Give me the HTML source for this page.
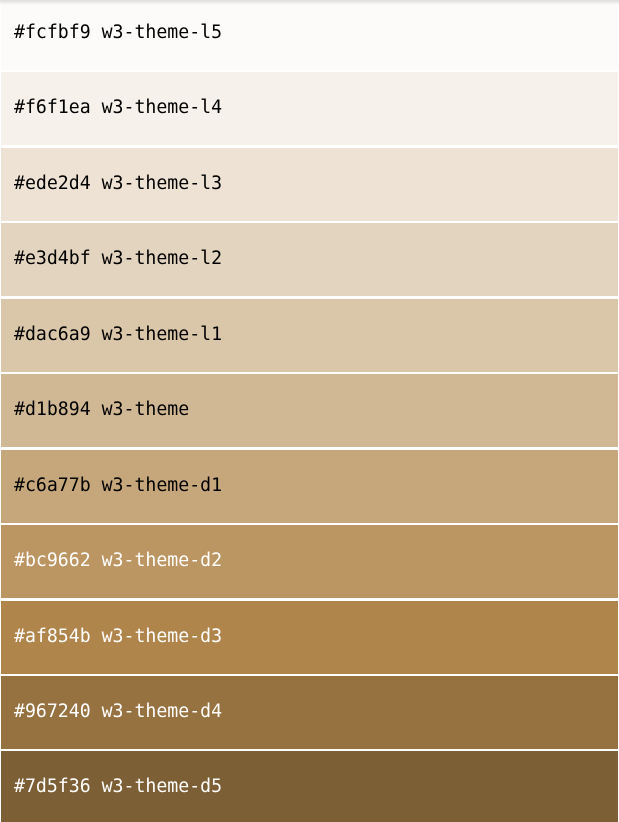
<!DOCTYPE html>
<html><head><style>
body{margin:0;width:619px;height:822px;overflow:hidden;background:#fff;position:relative;font-family:"DejaVu Sans Mono","Liberation Mono",monospace;font-size:18.2px}
.r{position:absolute;left:1px;width:617px;height:73px;line-height:72px;padding-left:13px;box-sizing:border-box;color:#000}
.w{color:#fff}
.sh{position:absolute;left:0;top:0;width:619px;height:5px;background:linear-gradient(#ddd,rgba(255,255,255,0))}
</style></head><body>
<div class="r" style="top:-3px;background:#fcfbf9">#fcfbf9 w3-theme-l5</div>
<div class="r" style="top:72px;background:#f6f1ea">#f6f1ea w3-theme-l4</div>
<div class="r" style="top:147.5px;background:#ede2d4">#ede2d4 w3-theme-l3</div>
<div class="r" style="top:223px;background:#e3d4bf">#e3d4bf w3-theme-l2</div>
<div class="r" style="top:298.5px;background:#dac6a9">#dac6a9 w3-theme-l1</div>
<div class="r" style="top:374px;background:#d1b894">#d1b894 w3-theme</div>
<div class="r" style="top:449.5px;background:#c6a77b">#c6a77b w3-theme-d1</div>
<div class="r w" style="top:525px;background:#bc9662">#bc9662 w3-theme-d2</div>
<div class="r w" style="top:600.5px;background:#af854b">#af854b w3-theme-d3</div>
<div class="r w" style="top:676px;background:#967240">#967240 w3-theme-d4</div>
<div class="r w" style="top:751px;height:71px;line-height:71px;background:#7d5f36">#7d5f36 w3-theme-d5</div>
<div class="sh"></div>
</body></html>
